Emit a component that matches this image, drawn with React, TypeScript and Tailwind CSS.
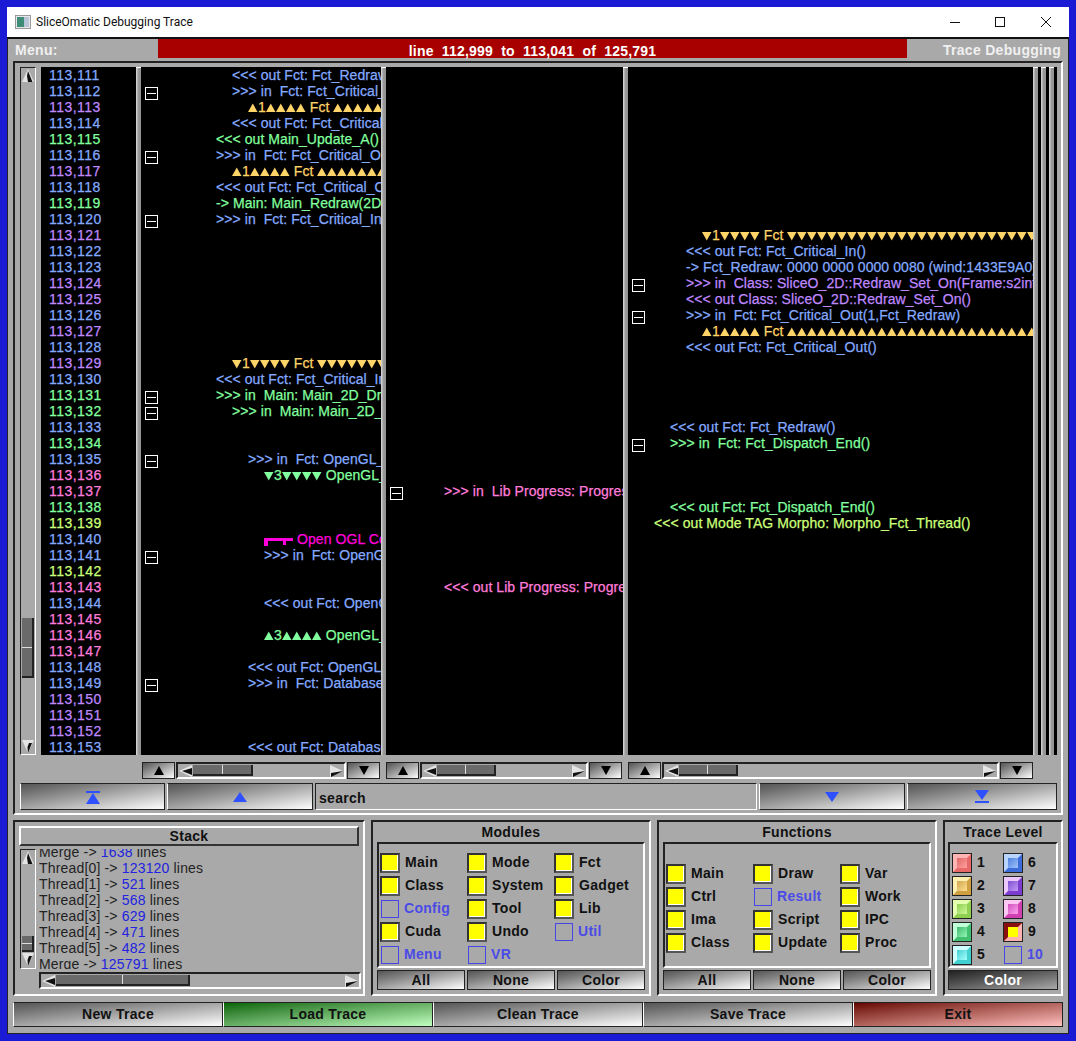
import type { ReactNode } from "react";

// ── trace colours
const B = "text-[#84aaff]";
const P = "text-[#bf88ff]";
const G = "text-[#82ff9e]";
const K = "text-[#ff7cdc]";
const L = "text-[#ccff78]";
const O = "text-[#ffd468]";
const M = "text-[#ff00dd]";

// first number is 113,111
const NUM_COLORS = [
  B, B, P, B, G, B, P, B, G, B,
  P, B, B, P, P, B, P, B, P, B,
  G, G, B, G, B, K, K, G, L, B,
  B, L, K, B, K, K, K, B, B, P,
  P, P, B,
];

const INDENT: Record<number, string> = {
  6: "pl-[6px]",
  22: "pl-[22px]",
  38: "pl-[38px]",
  54: "pl-[54px]",
  55: "pl-[55px]",
  71: "pl-[71px]",
  87: "pl-[87px]",
  103: "pl-[103px]",
};

type Cell = {
  row: number;
  indent: number;
  text: string;
  color: string;
  box?: boolean;
  bracket?: boolean;
};

const UP6 = "▲▲▲▲▲▲▲▲▲▲▲▲▲▲▲▲▲▲▲▲▲▲▲▲▲▲▲▲▲▲▲▲▲▲";
const DN6 = "▼▼▼▼▼▼▼▼▼▼▼▼▼▼▼▼▼▼▼▼▼▼▼▼▼▼▼▼▼▼▼▼▼▼";

const COL1: Cell[] = [
  { row: 0, indent: 71, text: "<<< out Fct: Fct_Redraw()", color: B },
  { row: 1, indent: 71, text: ">>> in  Fct: Fct_Critical_In(1,Fct_Redraw)", color: B, box: true },
  { row: 2, indent: 87, text: `▲1▲▲▲▲ Fct ${UP6}`, color: O },
  { row: 3, indent: 71, text: "<<< out Fct: Fct_Critical_In()", color: B },
  { row: 4, indent: 55, text: "<<< out Main_Update_A()", color: G },
  { row: 5, indent: 55, text: ">>> in  Fct: Fct_Critical_Out(1,Fct_Redraw)", color: B, box: true },
  { row: 6, indent: 71, text: `▲1▲▲▲▲ Fct ${UP6}`, color: O },
  { row: 7, indent: 55, text: "<<< out Fct: Fct_Critical_Out()", color: B },
  { row: 8, indent: 55, text: "-> Main: Main_Redraw(2D)", color: G },
  { row: 9, indent: 55, text: ">>> in  Fct: Fct_Critical_In(1,Fct_Redraw)", color: B, box: true },
  { row: 18, indent: 71, text: `▼1▼▼▼▼ Fct ${DN6}`, color: O },
  { row: 19, indent: 55, text: "<<< out Fct: Fct_Critical_In()", color: B },
  { row: 20, indent: 55, text: ">>> in  Main: Main_2D_Draw()", color: G, box: true },
  { row: 21, indent: 71, text: ">>> in  Main: Main_2D_Draw()", color: G, box: true },
  { row: 24, indent: 87, text: ">>> in  Fct: OpenGL_Lock()", color: B, box: true },
  { row: 25, indent: 103, text: "▼3▼▼▼▼ OpenGL_Lock", color: G },
  { row: 29, indent: 103, text: "Open OGL Context", color: M, bracket: true },
  { row: 30, indent: 103, text: ">>> in  Fct: OpenGL_Lock()", color: B, box: true },
  { row: 33, indent: 103, text: "<<< out Fct: OpenGL_Lock()", color: B },
  { row: 35, indent: 103, text: "▲3▲▲▲▲ OpenGL_Lock", color: G },
  { row: 37, indent: 87, text: "<<< out Fct: OpenGL_Lock()", color: B },
  { row: 38, indent: 87, text: ">>> in  Fct: Database_Lock()", color: B, box: true },
  { row: 42, indent: 87, text: "<<< out Fct: Database_Lock()", color: B },
];

const COL2: Cell[] = [
  { row: 26, indent: 38, text: ">>> in  Lib Progress: Progress_Set()", color: K, box: true },
  { row: 32, indent: 38, text: "<<< out Lib Progress: Progress_Set()", color: K },
];

const COL3: Cell[] = [
  { row: 10, indent: 54, text: `▼1▼▼▼▼ Fct ${DN6}`, color: O },
  { row: 11, indent: 38, text: "<<< out Fct: Fct_Critical_In()", color: B },
  { row: 12, indent: 38, text: "-> Fct_Redraw: 0000 0000 0000 0080 (wind:1433E9A0)", color: B },
  { row: 13, indent: 38, text: ">>> in  Class: SliceO_2D::Redraw_Set_On(Frame:s2int)", color: P, box: true },
  { row: 14, indent: 38, text: "<<< out Class: SliceO_2D::Redraw_Set_On()", color: P },
  { row: 15, indent: 38, text: ">>> in  Fct: Fct_Critical_Out(1,Fct_Redraw)", color: B, box: true },
  { row: 16, indent: 54, text: `▲1▲▲▲▲ Fct ${UP6}`, color: O },
  { row: 17, indent: 38, text: "<<< out Fct: Fct_Critical_Out()", color: B },
  { row: 22, indent: 22, text: "<<< out Fct: Fct_Redraw()", color: B },
  { row: 23, indent: 22, text: ">>> in  Fct: Fct_Dispatch_End()", color: G, box: true },
  { row: 27, indent: 22, text: "<<< out Fct: Fct_Dispatch_End()", color: G },
  { row: 28, indent: 6, text: "<<< out Mode TAG Morpho: Morpho_Fct_Thread()", color: L },
];

function Tri({ down }: { down: boolean }) {
  return (
    <svg width="10" height="10" viewBox="0 0 10 10" className="inline-block align-[-1px]">
      <polygon points={down ? "0,1 9.5,1 4.75,9.5" : "4.75,0.5 9.5,9 0,9"} fill="currentColor" />
    </svg>
  );
}

function TraceText({ text }: { text: string }) {
  return (
    <>
      {text.split(/([▲▼])/).map((part, i) =>
        part === "▲" || part === "▼" ? <Tri key={i} down={part === "▼"} /> : <span key={i}>{part}</span>,
      )}
    </>
  );
}

function MinusBox() {
  return (
    <div className="mt-[4px] ml-[4px] flex h-[13px] w-[13px] items-center justify-center border border-white">
      <div className="h-px w-[9px] bg-white" />
    </div>
  );
}

function Splitter() {
  return <div className="w-[5px] shrink-0 border-t border-t-white bg-linear-to-r from-[#dddddd] via-[#9a9a9a] to-[#909090]" />;
}

function TraceColumn({ cells, width }: { cells: Cell[]; width: string }) {
  const byRow = new Map(cells.map((c) => [c.row, c]));
  return (
    <div className={`${width} shrink-0 overflow-hidden tracking-[0.07px] [-webkit-text-stroke:0.25px]`}>
      {NUM_COLORS.map((_, i) => {
        const c = byRow.get(i);
        return (
          <div key={i} className="flex h-4 whitespace-pre">
            <div className="w-5 shrink-0">{c?.box && <MinusBox />}</div>
            {c && (
              <div className={`${INDENT[c.indent]} ${c.color} flex h-4 leading-4`}>
                {c.bracket && (
                  <svg width="33" height="16" viewBox="0 0 33 16" className="shrink-0">
                    <path d="M0 7h29v3H22v4h-3v-4H4v5H0z" fill="currentColor" />
                  </svg>
                )}
                <div>
                  <TraceText text={c.text} />
                </div>
              </div>
            )}
          </div>
        );
      })}
    </div>
  );
}

function ArrowV({ down }: { down?: boolean }) {
  return (
    <svg width="14" height="15" viewBox="0 0 14 15" className="shrink-0">
      {down ? (
        <>
          <polygon points="1,1 13,1 7,14" fill="#e4e4e4" />
          <polygon points="8,4 11,4 7,14 6.5,8" fill="#111" />
        </>
      ) : (
        <>
          <polygon points="7,1 13,14 1,14" fill="#e4e4e4" />
          <polygon points="7,3 11.5,14 7,14 6,8" fill="#111" />
        </>
      )}
    </svg>
  );
}

function ArrowH({ right }: { right?: boolean }) {
  return (
    <svg width="15" height="14" viewBox="0 0 15 14" className="shrink-0">
      {right ? (
        <>
          <polygon points="1,1 14,7 1,13" fill="#e4e4e4" />
          <polygon points="2,9 14,7 2,13" fill="#111" />
        </>
      ) : (
        <>
          <polygon points="14,1 1,7 14,13" fill="#e4e4e4" />
          <polygon points="14,4 4,7 14,11" fill="#111" />
        </>
      )}
    </svg>
  );
}

function ThumbV({ className }: { className: string }) {
  return (
    <div className={`${className} mx-auto flex w-[12px] flex-col border-r-2 border-b-2 border-[#222] bg-[#6a6a6a]`}>
      <div className="flex-1 border-b border-[#ddd]" />
      <div className="flex-1" />
    </div>
  );
}

function ThumbH({ width }: { width: string }) {
  return (
    <div className={`${width} flex h-[11px] border-r-2 border-b-2 border-[#222] bg-[#6a6a6a]`}>
      <div className="flex-1 border-r border-[#ddd]" />
      <div className="flex-1" />
    </div>
  );
}

function HScroll({ thumb, className }: { thumb: string; className: string }) {
  return (
    <div
      className={`${className} flex items-center border-2 border-t-[#222] border-l-[#222] border-r-white border-b-white bg-[#a9a9a9]`}
    >
      <ArrowH />
      <ThumbH width={thumb} />
      <div className="flex-1" />
      <ArrowH right />
    </div>
  );
}

const GRAD = "bg-linear-to-br from-[#555555] to-white";

function SmallBtn({ children }: { children: ReactNode }) {
  return (
    <div className={`flex h-[17px] w-[33px] shrink-0 items-center justify-center border border-[#222] ${GRAD}`}>
      {children}
    </div>
  );
}

function ScrollGroup({ width, thumb }: { width: string; thumb: string }) {
  return (
    <div className={`${width} flex shrink-0 gap-px`}>
      <SmallBtn>
        <svg width="12" height="9" viewBox="0 0 12 9">
          <polygon points="6,0 11,9 1,9" fill="#000" />
        </svg>
      </SmallBtn>
      <HScroll thumb={thumb} className="h-[17px] flex-1" />
      <SmallBtn>
        <svg width="12" height="9" viewBox="0 0 12 9">
          <polygon points="1,0 11,0 6,9" fill="#000" />
        </svg>
      </SmallBtn>
    </div>
  );
}

function NavBtn({ width, children }: { width: string; children: ReactNode }) {
  return (
    <div className={`${width} flex shrink-0 items-center justify-center border border-[#222] border-l-white ${GRAD}`}>
      {children}
    </div>
  );
}

function Panel({ width, children }: { width: string; children: ReactNode }) {
  return (
    <div
      className={`${width} flex shrink-0 flex-col border-2 border-t-[#222] border-l-[#222] border-r-white border-b-white`}
    >
      {children}
    </div>
  );
}

function Check({ state, label }: { state: "on" | "off"; label: string }) {
  return (
    <div className="flex h-[23px] items-center gap-[5px]">
      {state === "on" ? (
        <div className="h-5 w-5 shrink-0 border-2 border-t-[#333] border-l-[#333] border-r-[#555] border-b-[#555] bg-white">
          <div className="mr-px mb-px h-[15px] w-[15px] bg-[#ffff00]" />
        </div>
      ) : (
        <div className="ml-px h-[18px] w-[18px] shrink-0 border border-[#4646e6]" />
      )}
      <span className={state === "on" ? "font-bold text-[#111]" : "font-bold text-[#4b4be6]"}>{label}</span>
    </div>
  );
}

function GroupPanel({
  title,
  width,
  rows,
  topPad,
  cols,
}: {
  title: string;
  width: string;
  rows: [string, "on" | "off"][];
  topPad: string;
  cols: string;
}) {
  return (
    <Panel width={width}>
      <div className="flex h-5 items-center justify-center font-bold text-[#111]">{title}</div>
      <div className="mx-[4px] h-[126px] border-2 border-t-[#222] border-l-[#222] border-r-white border-b-white">
        <div className={`grid ${cols} grid-flow-row pl-px ${topPad}`}>
          {rows.map(([label, state]) => (
            <Check key={label} label={label} state={state} />
          ))}
        </div>
      </div>
      <div className="mx-[4px] mt-[2px] flex h-[20px] gap-[2px]">
        {["All", "None", "Color"].map((b) => (
          <div
            key={b}
            className={`flex flex-1 items-center justify-center border border-[#222] font-bold text-[#111] ${GRAD}`}
          >
            {b}
          </div>
        ))}
      </div>
    </Panel>
  );
}

const MODULES: [string, "on" | "off"][] = [
  ["Main", "on"], ["Mode", "on"], ["Fct", "on"],
  ["Class", "on"], ["System", "on"], ["Gadget", "on"],
  ["Config", "off"], ["Tool", "on"], ["Lib", "on"],
  ["Cuda", "on"], ["Undo", "on"], ["Util", "off"],
  ["Menu", "off"], ["VR", "off"],
];

const FUNCTIONS: [string, "on" | "off"][] = [
  ["Main", "on"], ["Draw", "on"], ["Var", "on"],
  ["Ctrl", "on"], ["Result", "off"], ["Work", "on"],
  ["Ima", "on"], ["Script", "on"], ["IPC", "on"],
  ["Class", "on"], ["Update", "on"], ["Proc", "on"],
];

const LEVELS: { n: number; cls: string }[] = [
  { n: 1, cls: "border-t-[#ffb4b4] border-l-[#ffb4b4] border-r-[#e86868] border-b-[#e86868] from-[#e06868] to-[#ffa0a0]" },
  { n: 6, cls: "border-t-[#b8d4ff] border-l-[#b8d4ff] border-r-[#3c6cdc] border-b-[#3c6cdc] from-[#5080dc] to-[#a0c4ff]" },
  { n: 2, cls: "border-t-[#fff0b0] border-l-[#fff0b0] border-r-[#d0a040] border-b-[#d0a040] from-[#d0a850] to-[#ffe090]" },
  { n: 7, cls: "border-t-[#ecc8ff] border-l-[#ecc8ff] border-r-[#7c3cd0] border-b-[#7c3cd0] from-[#8050d0] to-[#c498f8]" },
  { n: 3, cls: "border-t-[#e4ffb0] border-l-[#e4ffb0] border-r-[#90d050] border-b-[#90d050] from-[#90d050] to-[#ccf898]" },
  { n: 8, cls: "border-t-[#ffc8f4] border-l-[#ffc8f4] border-r-[#d040b0] border-b-[#d040b0] from-[#d050c0] to-[#ffa0ec]" },
  { n: 4, cls: "border-t-[#c0ffd8] border-l-[#c0ffd8] border-r-[#40c070] border-b-[#40c070] from-[#40b870] to-[#90f8b4]" },
  { n: 9, cls: "border-t-[#8a1010] border-l-[#8a1010] border-r-[#ffb0b0] border-b-[#ffb0b0] from-[#ffff00] to-[#ffff00]" },
  { n: 5, cls: "border-t-[#d0ffff] border-l-[#d0ffff] border-r-[#40d0d0] border-b-[#40d0d0] from-[#40d0d0] to-[#a0ffff]" },
];

const STACK: [string, string][] = [
  ["Merge", "1638"],
  ["Thread[0]", "123120"],
  ["Thread[1]", "521"],
  ["Thread[2]", "568"],
  ["Thread[3]", "629"],
  ["Thread[4]", "471"],
  ["Thread[5]", "482"],
  ["Merge", "125791"],
];

function Footer({ label, cls }: { label: string; cls: string }) {
  return (
    <div className={`flex flex-1 items-center justify-center border border-[#222] border-l-white font-bold text-[#111] ${cls}`}>
      {label}
    </div>
  );
}

export default function App() {
  return (
    <div className="h-[1041px] w-[1076px] overflow-hidden bg-[#1b1bd6] p-[7px] font-['Liberation_Sans',sans-serif] text-[14px] tracking-[0.3px]">
      <div className="flex h-[1027px] w-[1062px] flex-col">
        {/* title bar */}
        <div className="flex h-[30px] shrink-0 items-center bg-white font-['Roboto',sans-serif] text-[12px] tracking-normal text-[#111]">
          <svg width="16" height="14" viewBox="0 0 16 14" className="ml-[8px] shrink-0">
            <rect x="0.5" y="0.5" width="15" height="13" fill="#e8e8e8" stroke="#999" />
            <rect x="2" y="2" width="7" height="10" fill="#3c8c78" />
            <rect x="9" y="2" width="5" height="10" fill="#b8c4d8" />
          </svg>
          <span className="ml-[5px]">SliceOmatic Debugging Trace</span>
          <svg width="101" height="12" viewBox="0 0 101 12" className="mr-[18px] ml-auto shrink-0">
            <path d="M0 6.5h10" stroke="#111" fill="none" />
            <rect x="45.5" y="1.5" width="9" height="9" stroke="#111" fill="none" />
            <path d="M91 1l10 10M101 1l-10 10" stroke="#111" fill="none" />
          </svg>
        </div>

        <div className="flex flex-1 flex-col border-x border-b border-[#222] border-t-2 border-t-[#111] bg-[#a9a9a9]">
          {/* header */}
          <div className="flex h-[19px] shrink-0 font-bold text-[#f0f0f0]">
            <div className="flex w-[150px] items-center pt-[3px] pl-[7px]">Menu:</div>
            <div className="flex flex-1 items-center justify-center bg-[#a80000] pt-[5px] tracking-[0.2px] whitespace-pre text-white">
              line  112,999  to  113,041  of  125,791
            </div>
            <div className="flex w-[161px] items-center justify-end pt-[3px] pr-[7px]">Trace Debugging</div>
          </div>

          {/* trace panel */}
          <div className="mx-[5px] mt-[3px] flex h-[754px] shrink-0 flex-col border-2 border-t-[#222] border-l-[#222] border-r-white border-b-white pt-[4px] pl-[5px]">
            <div className="flex h-[688px] shrink-0">
              <div className="flex w-[16px] shrink-0 flex-col items-center border border-t-[#222] border-l-[#222] border-r-white border-b-white">
                <ArrowV />
                <ThumbV className="mt-[535px] h-[60px]" />
                <div className="flex-1" />
                <ArrowV down />
              </div>
              <div className="ml-[5px] flex w-[1016px] shrink-0 bg-black">
                <div className="w-[95px] shrink-0 pl-[8px] tracking-[0.45px] [-webkit-text-stroke:0.25px]">
                  {NUM_COLORS.map((c, i) => (
                    <div key={i} className={`${c} h-4 leading-4`}>
                      {`113,${111 + i}`}
                    </div>
                  ))}
                </div>
                <Splitter />
                <TraceColumn cells={COL1} width="w-[240px]" />
                <Splitter />
                <TraceColumn cells={COL2} width="w-[237px]" />
                <Splitter />
                <TraceColumn cells={COL3} width="w-[405px]" />
                <Splitter />
                <div className="w-[3px] shrink-0" />
                <Splitter />
                <div className="w-[3px] shrink-0" />
                <Splitter />
                <div className="w-[3px] shrink-0" />
              </div>
            </div>

            {/* column scrollers */}
            <div className="mt-[7px] ml-[122px] flex h-[17px] shrink-0 gap-[6px]">
              <ScrollGroup width="w-[238px]" thumb="w-[60px]" />
              <ScrollGroup width="w-[236px]" thumb="w-[59px]" />
              <ScrollGroup width="w-[405px]" thumb="w-[59px]" />
            </div>

            {/* search row */}
            <div className="mt-[4px] flex h-[27px] shrink-0 gap-[2px] pr-[4px]">
              <NavBtn width="w-[145px]">
                <svg width="14" height="14" viewBox="0 0 14 14">
                  <path d="M0 1h14v2H0zM7 3l7 11H0z" fill="#2e50ff" />
                </svg>
              </NavBtn>
              <NavBtn width="w-[146px]">
                <svg width="14" height="10" viewBox="0 0 14 10">
                  <polygon points="7,0 14,10 0,10" fill="#2e50ff" />
                </svg>
              </NavBtn>
              <div className="flex w-[442px] shrink-0 items-end border border-t-[#222] border-l-[#222] border-r-white border-b-white pl-[3px] font-bold text-[#111]">
                search
              </div>
              <NavBtn width="w-[146px]">
                <svg width="14" height="10" viewBox="0 0 14 10">
                  <polygon points="0,0 14,0 7,10" fill="#2e50ff" />
                </svg>
              </NavBtn>
              <NavBtn width="flex-1">
                <svg width="14" height="14" viewBox="0 0 14 14">
                  <path d="M0 0h14L7 10zM0 11h14v2H0z" fill="#2e50ff" />
                </svg>
              </NavBtn>
            </div>
          </div>

          {/* lower panels */}
          <div className="mx-[5px] mt-[5px] flex h-[176px] shrink-0 gap-[6px]">
            <Panel width="w-[352px]">
              <div className="mx-[4px] mt-[4px] flex h-[20px] shrink-0 items-center justify-center border-2 border-t-white border-l-white border-r-[#333] border-b-[#333] font-bold text-[#111]">
                Stack
              </div>
              <div className="mt-[3px] ml-[5px] flex h-[120px] shrink-0">
                <div className="flex w-[16px] shrink-0 flex-col items-center border border-t-[#222] border-l-[#222] border-r-white border-b-white">
                  <ArrowV />
                  <ThumbV className="mt-[71px] h-[16px]" />
                  <ArrowV down />
                </div>
                <div className="ml-[3px] h-[120px] flex-1 overflow-hidden leading-4 tracking-[0.17px] text-[#222]">
                  <div className="-mt-[5px]">
                    {STACK.map(([name, n], i) => (
                      <div key={i} className="h-4 whitespace-pre">
                        {name} -&gt; <span className="text-[#2222e0]">{n}</span> lines
                      </div>
                    ))}
                  </div>
                </div>
              </div>
              <HScroll thumb="w-[134px]" className="mt-[3px] mr-[2px] ml-[24px] h-[17px]" />
            </Panel>

            <GroupPanel title="Modules" width="w-[280px]" rows={MODULES} topPad="pt-[7px]" cols="grid-cols-[87px_87px_1fr]" />
            <GroupPanel title="Functions" width="w-[280px]" rows={FUNCTIONS} topPad="pt-[18px]" cols="grid-cols-[87px_87px_1fr]" />

            <Panel width="w-[120px]">
              <div className="flex h-5 items-center justify-center font-bold text-[#111]">Trace Level</div>
              <div className="mx-[3px] h-[126px] border-2 border-t-[#222] border-l-[#222] border-r-white border-b-white">
                <div className="grid grid-cols-[51px_1fr] pt-[7px] pl-[2px]">
                  {LEVELS.map((l) => (
                    <div key={l.n} className="flex h-[23px] items-center gap-[5px]">
                      <div className="h-5 w-5 shrink-0 border border-[#222]">
                        <div className={`h-full w-full border-[4px] bg-linear-to-br ${l.cls}`} />
                      </div>
                      <span className="font-bold text-[#111]">{l.n}</span>
                    </div>
                  ))}
                  <div className="flex h-[23px] items-center gap-[5px]">
                    <div className="ml-px h-[18px] w-[18px] shrink-0 border border-[#4646e6]" />
                    <span className="font-bold text-[#4b4be6]">10</span>
                  </div>
                </div>
              </div>
              <div className="mx-[3px] mt-[2px] flex h-[20px] items-center justify-center border border-[#222] bg-linear-to-br from-[#222222] to-[#aaaaaa] font-bold text-white">
                Color
              </div>
            </Panel>
          </div>

          {/* footer */}
          <div className="mx-[5px] mt-[6px] flex h-[25px] shrink-0">
            <Footer label="New Trace" cls={GRAD} />
            <Footer label="Load Trace" cls="bg-linear-to-br from-[#006600] to-[#c0ffc0]" />
            <Footer label="Clean Trace" cls={GRAD} />
            <Footer label="Save Trace" cls={GRAD} />
            <Footer label="Exit" cls="bg-linear-to-br from-[#660000] to-[#ffc0c0]" />
          </div>
        </div>
      </div>
    </div>
  );
}
